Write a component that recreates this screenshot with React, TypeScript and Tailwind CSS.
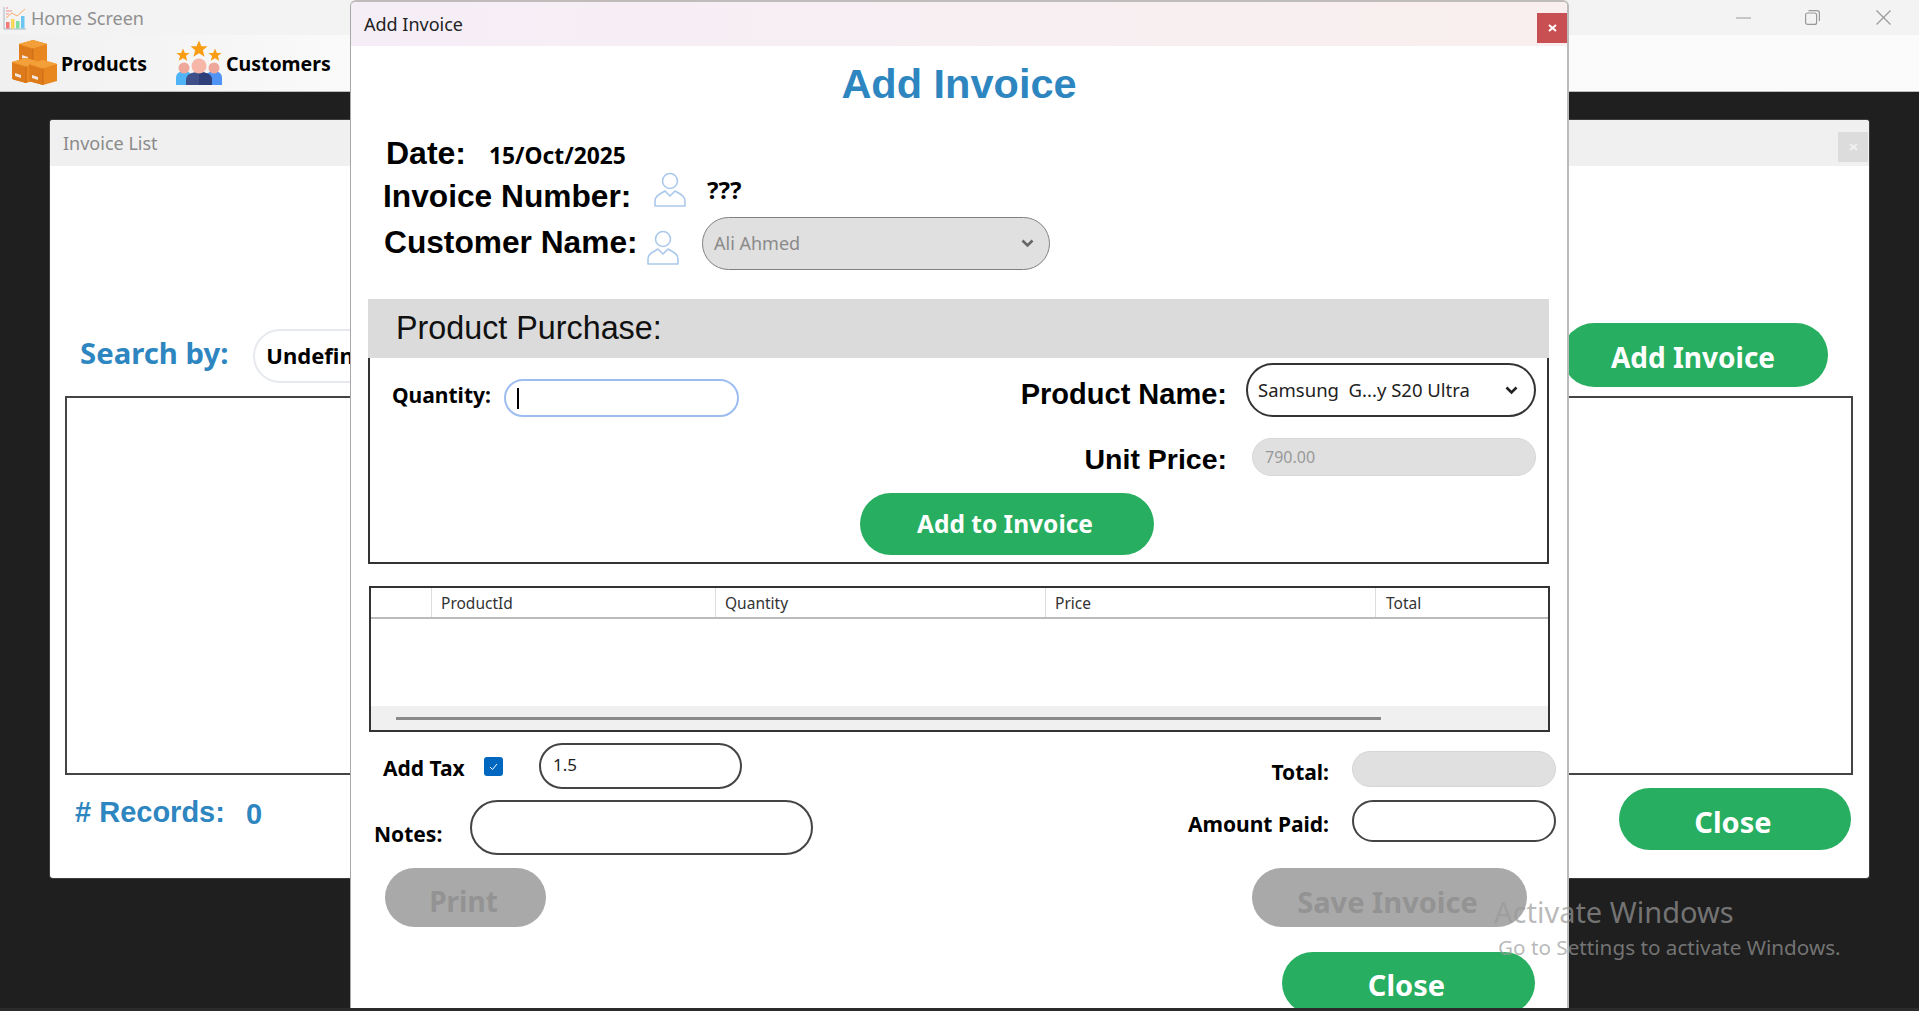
// App.tsx - invoice screen

const bodyFont = "font-['Noto_Sans',sans-serif]";
const formFont = "font-['Liberation_Sans',Arial,sans-serif]";

// ============ ICONS ============

function AppIcon() {
  return (
    <svg width="24" height="24" viewBox="0 0 24 24" className="mt-[1px]">
      <path d="M1 1V23H23" fill="none" stroke="#9aa3b5" strokeWidth="0.8" />
      <rect x="3" y="16" width="3.5" height="6.5" fill="#f47a7a" />
      <rect x="8" y="13" width="3.5" height="9.5" fill="#f9d65c" />
      <rect x="13" y="15" width="3.5" height="7.5" fill="#7ee0a0" />
      <rect x="18" y="10" width="3.5" height="12.5" fill="#6cc6f2" />
      <path d="M3 12L9 7L14 10L22 3" fill="none" stroke="#f5a65b" strokeWidth="0.9" />
      <path d="M3 2H5M3 5H9M3 8H6" stroke="#ef8b8b" strokeWidth="1" />
    </svg>
  );
}

function Box({ x, y }: { x: number; y: number }) {
  return (
    <g transform={`translate(${x} ${y})`}>
      <path d="M0 4L14 0L28 4V21L14 25L0 21Z" fill="#e8861f" />
      <path d="M0 5L14 9V25L1 21.5Z" fill="#dc7a1c" />
      <path d="M0 4L14 0L28 4L14 8.5Z" fill="#f3a03a" />
      <path d="M14 8.5V25" stroke="#b9601a" strokeWidth="0.6" />
      <path d="M3 15L9 17V20L3 18Z" fill="#f4e6dc" />
    </g>
  );
}

function BoxesIcon() {
  return (
    <svg width="46" height="46" viewBox="0 0 46 46">
      <Box x={7} y={0} />
      <Box x={0} y={18} />
      <Box x={17} y={20} />
    </svg>
  );
}

function Star({ x, y, s }: { x: number; y: number; s: number }) {
  return (
    <path
      transform={`translate(${x} ${y}) scale(${s})`}
      d="M0 -10L2.9 -3.1L10 -3.1L4.5 1.5L6.5 9L0 5L-6.5 9L-4.5 1.5L-10 -3.1L-2.9 -3.1Z"
      fill="#f99d13"
    />
  );
}

function CustomersIcon() {
  return (
    <svg width="46" height="46" viewBox="0 0 46 46">
      <Star x={23} y={9} s={0.85} />
      <Star x={7} y={15} s={0.65} />
      <Star x={39} y={15} s={0.65} />
      <path d="M0 45V38C0 33 4 31 8 31C12 31 16 33 16 38V45Z" fill="#4fb4f5" />
      <path d="M30 45V38C30 33 34 31 38 31C42 31 46 33 46 38V45Z" fill="#4f94f5" />
      <circle cx="8" cy="28" r="5.5" fill="#eda79b" />
      <circle cx="38" cy="28" r="5.5" fill="#eda79b" />
      <path d="M10 45V40C10 34 16 32 23 32C30 32 36 34 36 40V45Z" fill="#3f4f8a" />
      <path d="M23 32C30 32 36 34 36 40V45H23Z" fill="#2f3f7a" />
      <circle cx="23" cy="26" r="7.5" fill="#f7b7a8" />
    </svg>
  );
}

function PersonIcon() {
  return (
    <svg width="32" height="35" viewBox="0 0 32 35" fill="none" stroke="#aac8ec" strokeWidth="1.6">
      <circle cx="16" cy="9" r="7.5" />
      <path d="M1 34V29C1 24 6 22 11 19L16 24L21 19C26 22 31 24 31 29V34Z" strokeLinejoin="round" />
    </svg>
  );
}

function Chevron({ color }: { color: string }) {
  return (
    <svg width="13" height="9" viewBox="0 0 13 9" fill="none" stroke={color} strokeWidth="2.6">
      <path d="M1.5 1.5L6.5 6.5L11.5 1.5" />
    </svg>
  );
}

function CloseGlyph({ color }: { color: string }) {
  return (
    <svg width="9" height="8" viewBox="0 0 9 8" fill="none" stroke={color} strokeWidth="2">
      <path d="M1 1L8 7M8 1L1 7" />
    </svg>
  );
}

// ============ SMALL PARTS ============

function PillButton({ label, className = "" }: { label: string; className?: string }) {
  return (
    <div className={`flex items-center justify-center rounded-full font-bold shrink-0 pr-[4px] ${className}`}>
      {label}
    </div>
  );
}

const gridCols = [
  { label: "", width: "w-[61px]" },
  { label: "ProductId", width: "w-[284px]" },
  { label: "Quantity", width: "w-[330px]" },
  { label: "Price", width: "w-[330px]" },
];

// ============ BACK WINDOW ============

function InvoiceListWindow() {
  return (
    <div className="absolute left-[50px] top-[120px] w-[1819px] h-[758px] flex flex-col bg-white rounded-[3px] shadow-[0_0_0_1px_#3d3d3d]">
      <div className="h-[46px] shrink-0 flex justify-between bg-[#f0f0f0] rounded-t-[3px]">
        <span className="ml-[13px] mt-[11px] text-[18px] leading-[24px] text-[#8a8a8a]">Invoice List</span>
        <div className="mt-[12px] mr-[1px] w-[30px] h-[30px] bg-[#dcdcdc] flex items-center justify-center">
          <CloseGlyph color="#f0f0f0" />
        </div>
      </div>

      <div className="mt-[157px] h-[64px] flex items-center shrink-0">
        <span className="ml-[30px] mb-[3px] text-[29.3px] leading-none font-bold text-[#2e86c1]">Search by:</span>
        <div className="ml-[25px] w-[300px] h-[54px] mt-[1px] flex items-center pl-[11px] rounded-full border-2 border-[#e6e9ee] text-[22px] font-bold text-black">
          Undefined
        </div>
        <PillButton
          label="Add Invoice"
          className="ml-auto mr-[41px] w-[266px] h-[64px] pt-[4px] bg-[#27ae60] text-white text-[28px]"
        />
      </div>

      <div className="mt-[9px] ml-[15px] w-[1788px] h-[379px] border-2 border-[#444] shrink-0" />

      <div className="mt-[13px] flex items-start">
        <span className={`ml-[25px] mt-[10px] text-[29px] leading-none font-bold text-[#2e86c1] ${formFont}`}># Records:</span>
        <span className={`ml-[21px] mt-[12px] text-[29px] leading-none font-bold text-[#2e86c1] ${formFont}`}>0</span>
        <PillButton
          label="Close"
          className="ml-auto mr-[18px] w-[232px] h-[62px] pt-[6px] bg-[#27ae60] text-white text-[29px]"
        />
      </div>
    </div>
  );
}

// ============ MODAL ============

function AddInvoiceModal() {
  return (
    <div className="absolute left-[350px] top-0 w-[1219px] h-[1008px] bg-white border-l border-[#a8a8a8] border-r-2 border-r-[#bbb] border-t-2 border-t-[#c0bcbc] rounded-t-[6px] overflow-hidden">
      {/* Title bar */}
      <div className="h-[44px] flex justify-between bg-linear-to-r from-[#f6eef7] to-[#f9efee]">
        <span className="ml-[13px] mt-[10px] text-[18px] leading-[24px] text-[#222]">Add Invoice</span>
        <div className="mt-[11px] w-[30px] h-[30px] bg-[#c95052] flex items-center justify-center">
          <CloseGlyph color="#ffffff" />
        </div>
      </div>

      <h1 className={`mt-[17px] text-center text-[41.5px] leading-[41px] font-bold text-[#2e86c1] ${formFont}`}>
        Add Invoice
      </h1>

      {/* Date / number / customer */}
      <div className="mt-[33px] h-[35px] flex items-baseline pl-[35px]">
        <span className={`text-[32px] leading-[32px] font-bold text-black ${formFont}`}>Date:</span>
        <span className="ml-[23px] text-[22.8px] leading-[32px] font-bold text-black">15/Oct/2025</span>
      </div>
      <div className="h-[45px] flex items-start pl-[32px]">
        <span className={`mt-[8px] w-[271px] text-[31.7px] leading-[32px] font-bold text-black ${formFont}`}>
          Invoice Number:
        </span>
        <PersonIcon />
        <span className="ml-[21px] mt-[2px] text-[24px] leading-[32px] font-bold text-black">???</span>
      </div>
      <div className="h-[53px] flex items-start pl-[33px]">
        <span className={`mt-[9px] w-[263px] text-[31.7px] leading-[32px] font-bold text-black ${formFont}`}>
          Customer Name:
        </span>
        <div className="mt-[13px]">
          <PersonIcon />
        </div>
        <div className="ml-[23px] w-[348px] h-[53px] flex items-center justify-between pl-[11px] pr-[15px] rounded-full bg-[#e0e0e0] border border-[#808080] text-[18px] text-[#8a8a8a]">
          Ali Ahmed
          <Chevron color="#666" />
        </div>
      </div>

      {/* Product purchase */}
      <div className="mt-[29px] ml-[17px] w-[1181px]">
        <div className={`h-[59px] flex items-center pl-[28px] bg-[#dbdbdb] text-[32.3px] text-[#111] ${formFont}`}>
          Product Purchase:
        </div>
        <div className="h-[206px] border-x-2 border-b-2 border-[#333]">
          <div className="pt-[5px] h-[59px] flex justify-between">
            <div className="mt-[16px] ml-[22px] h-[38px] flex items-center">
              <span className="mb-[4px] w-[112px] text-[21px] font-bold text-black">Quantity:</span>
              <div className="w-[235px] h-[38px] flex items-center pl-[11px] rounded-full border-2 border-[#9dbdf0]">
                <div className="w-[2px] h-[21px] bg-black" />
              </div>
            </div>
            <div className="mr-[11px] flex items-center">
              <span className={`mt-[8px] text-[29px] leading-[29px] font-bold text-black ${formFont}`}>Product Name:</span>
              <div className="ml-[19px] w-[290px] h-[54px] flex items-center justify-between pl-[10px] pr-[16px] rounded-full border-2 border-[#333] text-[18.5px] text-[#222]">
                <span className="whitespace-pre">Samsung  G...y S20 Ultra</span>
                <Chevron color="#222" />
              </div>
            </div>
          </div>
          <div className="mt-[21px] mr-[11px] flex justify-end items-center">
            <span className={`mt-[4px] text-[28.5px] leading-[29px] font-bold text-black ${formFont}`}>Unit Price:</span>
            <div className="ml-[25px] w-[284px] h-[38px] flex items-center pl-[12px] rounded-full bg-[#e0e0e0] border border-[#d8d8d8] text-[16px] text-[#999]">
              790.00
            </div>
          </div>
          <PillButton
            label="Add to Invoice"
            className="mt-[17px] ml-[490px] w-[294px] h-[62px] bg-[#27ae60] text-white text-[24.5px]"
          />
        </div>
      </div>

      {/* Items grid */}
      <div className="mt-[22px] ml-[18px] w-[1181px] h-[146px] flex flex-col border-2 border-[#333]">
        <div className="h-[31px] flex border-b-2 border-[#bbb] text-[15.5px] text-[#333]">
          {gridCols.map((col) => (
            <div key={col.label} className={`${col.width} pl-[9px] pt-[4px] border-r border-[#ddd]`}>
              {col.label}
            </div>
          ))}
          <div className="pl-[10px] pt-[4px]">Total</div>
        </div>
        <div className="flex-1" />
        <div className="h-[24px] flex items-center bg-[#f0f0f0]">
          <div className="ml-[25px] w-[985px] h-[3px] bg-[#8a8a8a]" />
        </div>
      </div>

      {/* Bottom fields */}
      <div className="flex justify-between items-start">
        <div className="flex flex-col items-start">
          <div className="mt-[11px] ml-[32px] flex items-center">
            <span className="mt-[5px] w-[101px] text-[21px] font-bold text-black">Add Tax</span>
            <div className="w-[19px] h-[19px] flex items-center justify-center rounded-[3px] bg-[#0067c0]">
              <svg width="11" height="11" viewBox="0 0 11 11" fill="none" stroke="#fff" strokeWidth="1">
                <path d="M2 6L4.5 8.5L9 3" />
              </svg>
            </div>
            <div className="ml-[36px] w-[203px] h-[46px] pl-[12px] pt-[6px] rounded-full border-2 border-[#444] text-[17px] leading-[28px] text-[#222]">
              1.5
            </div>
          </div>
          <div className="mt-[11px] ml-[23px] flex items-center">
            <span className="mt-[15px] w-[96px] text-[21px] font-bold text-black">Notes:</span>
            <div className="w-[343px] h-[55px] rounded-full border-2 border-[#444]" />
          </div>
          <PillButton
            label="Print"
            className="mt-[13px] ml-[34px] w-[161px] h-[59px] pt-[6px] bg-[#a9a9a9] text-[#939393] text-[28px]"
          />
        </div>

        <div className="mr-[11px] flex flex-col items-end">
          <div className="mt-[19px] flex items-center">
            <span className="mt-[5px] text-[21px] leading-[28px] font-bold text-black">Total:</span>
            <div className="ml-[23px] w-[204px] h-[36px] rounded-full bg-[#e0e0e0] border border-[#d5d5d5]" />
          </div>
          <div className="mt-[13px] flex items-center">
            <span className="mt-[6px] text-[21px] leading-[28px] font-bold text-black">Amount Paid:</span>
            <div className="ml-[23px] w-[204px] h-[42px] rounded-full border-2 border-[#444]" />
          </div>
          <PillButton
            label="Save Invoice"
            className="mt-[26px] mr-[29px] w-[275px] h-[59px] pt-[8px] bg-[#a9a9a9] text-[#939393] text-[29px]"
          />
          <PillButton
            label="Close"
            className="mt-[25px] mr-[21px] w-[253px] h-[62px] pt-[4px] bg-[#27ae60] text-white text-[29px]"
          />
        </div>
      </div>
    </div>
  );
}

// ============ APP ============

export default function App() {
  return (
    <div className={`relative w-full h-screen flex flex-col overflow-hidden bg-[#1f1f1f] ${bodyFont}`}>
      {/* Title bar */}
      <div className="h-[35px] shrink-0 flex items-center bg-[#f3f3f3]">
        <div className="ml-[3px]">
          <AppIcon />
        </div>
        <span className="ml-[4px] mt-[2px] text-[18px] text-[#8f8f8f]">Home Screen</span>
        <div className="ml-auto flex items-center text-[#999]">
          <svg width="15" height="2" viewBox="0 0 15 2" className="mr-[54px]">
            <path d="M0 1H15" stroke="currentColor" strokeWidth="1" />
          </svg>
          <svg width="15" height="15" viewBox="0 0 15 15" fill="none" stroke="currentColor" strokeWidth="1.2" className="mr-[56px]">
            <rect x="0.6" y="3" width="11" height="11.4" rx="2" />
            <path d="M3.5 0.7H12C13.3 0.7 14.4 1.8 14.4 3.2V11" />
          </svg>
          <svg width="15" height="15" viewBox="0 0 15 15" fill="none" stroke="currentColor" strokeWidth="1.2" className="mr-[28px]">
            <path d="M0.5 0.5L14.5 14.5M14.5 0.5L0.5 14.5" />
          </svg>
        </div>
      </div>

      {/* Toolbar */}
      <div className="h-[57px] shrink-0 flex items-center pl-[12px] border-b border-[#bdbdbd] bg-linear-to-r from-[#f0f0f0] to-[#fbfbfb] to-20% text-[19.5px] font-bold text-black">
        <BoxesIcon />
        <span className="ml-[3px] mt-[2px]">Products</span>
        <div className="ml-[29px]">
          <CustomersIcon />
        </div>
        <span className="ml-[4px] mt-[2px]">Customers</span>
      </div>

      <InvoiceListWindow />
      <AddInvoiceModal />

      {/* Bottom edge of the screen */}
      <div className="absolute left-0 right-0 bottom-0 h-[3px] bg-[#2c2a2c]" />

      {/* Activation watermark */}
      <div className="absolute left-[1494px] top-[892px] pointer-events-none text-[#9a9a9a]/70">
        <p className="text-[29px] leading-[40px]">Activate Windows</p>
        <p className="ml-[4px] mt-[1px] text-[20.7px] leading-[28px]">Go to Settings to activate Windows.</p>
      </div>
    </div>
  );
}
